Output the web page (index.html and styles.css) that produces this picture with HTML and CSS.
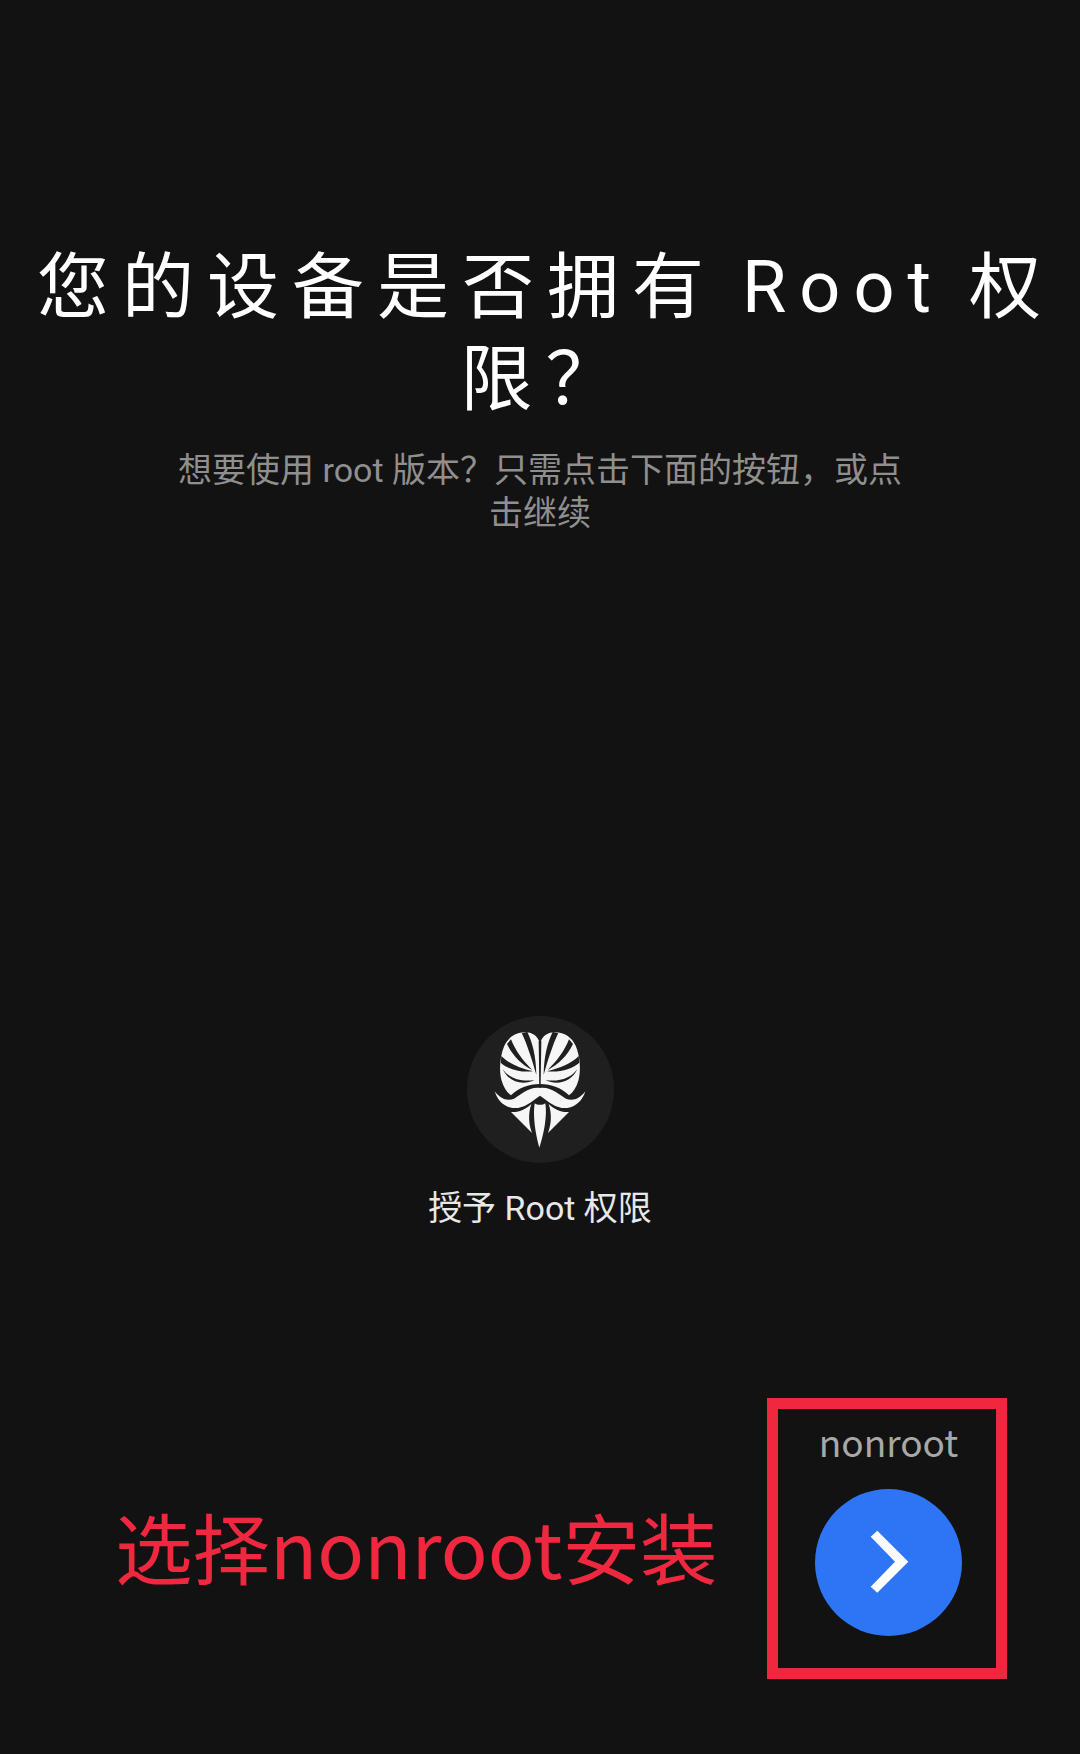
FILE: index.html
```html
<!DOCTYPE html>
<html lang="zh-CN">
<head>
    <meta charset="UTF-8">
    <meta name="viewport" content="width=device-width, initial-scale=1.0">
    <title>Root</title>
    <link rel="stylesheet" href="styles.css">
</head>
<body>
    <main class="page">
        <h1 class="title">您的设备是否拥有 Root 权限？</h1>
        <p class="subtitle">想要使用 root 版本？只需点击下面的按钮，或点击继续</p>

        <section class="grant">
            <div class="grant-icon">
                <svg viewBox="0 -32 600 600" width="200" height="200">
                    <defs>
                        <g id="half">
                            <path class="mask" d="M300 128 C292 102 272 93 250 95 C225 97 205 110 193 135 C180 165 176 210 185 240 C191 260 200 274 213 284 C235 262 265 250 300 250 Z"/>
                            <path class="mask" d="M300 262 C265 258 245 282 222 294 C202 303 180 294 164 272 C172 298 190 318 218 322 C250 325 272 305 300 285 Z"/>
                            <path class="mask" d="M213 334 C238 336 258 325 274 310 C264 340 266 370 276 397 Z"/>
                            <path class="cut" d="M245 97 L262 94 C277 125 288 165 289 222 C276 178 262 132 245 97 Z"/>
                            <path class="cut" d="M201 130 L213 116 C226 150 250 182 277 208 C245 192 218 165 201 130 Z"/>
                            <path class="cut" d="M184 166 C205 188 240 202 279 212 C240 216 205 206 182 186 Z"/>
                            <path class="cut" d="M188 205 C205 232 245 245 283 238 C250 255 205 245 188 205 Z"/>
                            <path class="cut" d="M296 120 L301 120 L301 252 L298 252 Z"/>
                        </g>
                    </defs>
                    <use href="#half"/>
                    <use href="#half" transform="matrix(-1 0 0 1 600 0)"/>
                    <path class="mask" d="M284 308 C292 314 308 314 316 308 C322 345 312 400 298 441 C286 400 278 345 284 308 Z"/>
                </svg>
            </div>
            <div class="grant-label">授予 Root 权限</div>
        </section>

        <section class="bottom">
            <div class="note">选择nonroot安装</div>
            <div class="next-box">
                <div class="next-label">nonroot</div>
                <div class="next-button">
                    <svg viewBox="0 0 147 147" width="147" height="147">
                        <polygon points="55.7,47.7 62.3,41.7 93.3,72.7 62.3,103.7 55.7,97.7 80,72.7" fill="#fff"/>
                    </svg>
                </div>
            </div>
        </section>
    </main>
</body>
</html>
```

FILE: styles.css
```css
* {
    box-sizing: border-box;
}
body {
    margin: 0;
    background-color: #121212;
    font-family: Roboto, "Noto Sans CJK SC", sans-serif;
}
.page {
    display: flex;
    flex-direction: column;
    height: 1754px;
    padding-top: 242px;
}
.title {
    margin: 0;
    padding: 0 20px 0 31px;
    color: #fff;
    font-size: 72px;
    font-weight: 400;
    line-height: 92px;
    letter-spacing: 13px;
    word-spacing: -6px;
    text-align: center;
}
.subtitle {
    margin: 23px 0 0;
    padding: 0 170px;
    color: #8f8f8f;
    font-size: 34px;
    line-height: 43px;
    text-align: center;
}
.grant {
    display: flex;
    flex-direction: column;
    align-items: center;
    margin-top: 481px;
}
.grant-icon {
    display: flex;
    align-items: center;
    justify-content: center;
    width: 147px;
    height: 147px;
    border-radius: 50%;
    background-color: #1f1f1f;
}
.grant-icon svg {
    flex: none;
}
.mask {
    fill: #f6f6f6;
}
.cut {
    fill: #1f1f1f;
}
.grant-label {
    margin-top: 22px;
    color: #e8e8e8;
    font-size: 34px;
    line-height: 46px;
}
.bottom {
    display: flex;
    align-items: center;
    justify-content: space-between;
    margin-top: 167px;
    padding: 0 73px 0 115px;
}
.note {
    margin-top: 12px;
    color: #f0283f;
    font-size: 77.5px;
    line-height: 100px;
    font-family: "Noto Sans CJK SC", sans-serif;
}
.next-box {
    display: flex;
    flex-direction: column;
    align-items: center;
    width: 240px;
    height: 281px;
    padding: 7px 0 0 3px;
    border: 11px solid #f0283f;
}
.next-label {
    color: #a8a8a8;
    font-family: "Noto Sans CJK SC", sans-serif;
    font-size: 37px;
    line-height: 50px;
}
.next-button {
    width: 147px;
    height: 147px;
    margin-top: 23px;
    border-radius: 50%;
    background-color: #2e75f5;
}
.next-button svg {
    display: block;
}
```
